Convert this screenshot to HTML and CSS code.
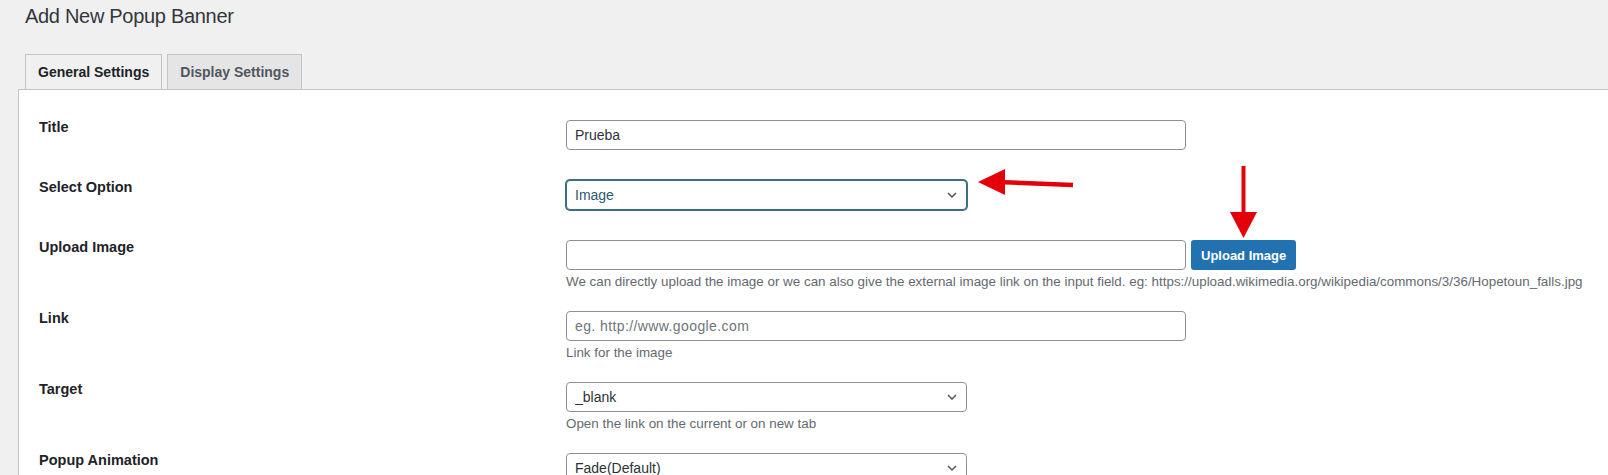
FILE: index.html
```html
<!DOCTYPE html>
<html lang="en">
<head>
    <meta charset="UTF-8">
    <meta name="viewport" content="width=device-width, initial-scale=1.0">
    <title>Add New Popup Banner</title>
    <link rel="stylesheet" href="styles.css">
</head>
<body>
    <div class="wrap">
        <h1 class="page-title">Add New Popup Banner</h1>

        <div class="nav-tabs">
            <a class="nav-tab nav-tab-active">General Settings</a>
            <a class="nav-tab">Display Settings</a>
        </div>

        <div class="panel">
            <div class="field-row">
                <label class="field-label">Title</label>
                <div class="field-control">
                    <input type="text" class="text-input" value="Prueba">
                </div>
            </div>

            <div class="field-row">
                <label class="field-label">Select Option</label>
                <div class="field-control">
                    <div class="select-wrap is-focus">
                        <select class="select-input">
                            <option>Image</option>
                        </select>
                        <svg class="chevron" width="10" height="6" viewBox="0 0 10 6"><path d="M1 1l4 4 4-4" fill="none" stroke="#50575e" stroke-width="1.5"/></svg>
                    </div>
                </div>
            </div>

            <div class="field-row">
                <label class="field-label">Upload Image</label>
                <div class="field-control has-desc">
                    <div class="upload-line">
                        <input type="text" class="text-input">
                        <button class="button-primary">Upload Image</button>
                    </div>
                    <p class="description">We can directly upload the image or we can also give the external image link on the input field. eg: https://upload.wikimedia.org/wikipedia/commons/3/36/Hopetoun_falls.jpg</p>
                </div>
            </div>

            <div class="field-row">
                <label class="field-label">Link</label>
                <div class="field-control has-desc">
                    <input type="text" class="text-input" placeholder="eg. http://www.google.com">
                    <p class="description">Link for the image</p>
                </div>
            </div>

            <div class="field-row">
                <label class="field-label">Target</label>
                <div class="field-control has-desc">
                    <div class="select-wrap">
                        <select class="select-input">
                            <option>_blank</option>
                        </select>
                        <svg class="chevron" width="10" height="6" viewBox="0 0 10 6"><path d="M1 1l4 4 4-4" fill="none" stroke="#50575e" stroke-width="1.5"/></svg>
                    </div>
                    <p class="description">Open the link on the current or on new tab</p>
                </div>
            </div>

            <div class="field-row">
                <label class="field-label">Popup Animation</label>
                <div class="field-control">
                    <div class="select-wrap">
                        <select class="select-input">
                            <option>Fade(Default)</option>
                        </select>
                        <svg class="chevron" width="10" height="6" viewBox="0 0 10 6"><path d="M1 1l4 4 4-4" fill="none" stroke="#50575e" stroke-width="1.5"/></svg>
                    </div>
                </div>
            </div>
        </div>
    </div>

    <!-- red annotation arrows -->
    <svg class="arrow arrow-left" width="100" height="30" viewBox="975 168 100 30">
        <line x1="998" y1="182" x2="1073" y2="185" stroke="#e3000b" stroke-width="4.5"/>
        <polygon points="978,182 1005,169 1005,195" fill="#e3000b"/>
    </svg>
    <svg class="arrow arrow-down" width="30" height="75" viewBox="1228 165 30 75">
        <line x1="1243.5" y1="166" x2="1243.5" y2="215" stroke="#e3000b" stroke-width="4"/>
        <polygon points="1230,212 1257,212 1243.5,238" fill="#e3000b"/>
    </svg>
</body>
</html>
```

FILE: styles.css
```css
body {
    margin: 0;
    background: #f0f0f1;
    font-family: 'Liberation Sans', Arial, sans-serif;
    color: #3c434a;
    position: relative;
    overflow: hidden;
}
.wrap {
    padding-left: 18px;
}
.page-title {
    margin: 4px 0 0 7px;
    font-size: 20px;
    line-height: 24px;
    font-weight: 400;
    letter-spacing: -0.3px;
    color: #32373c;
}
.nav-tabs {
    display: flex;
    gap: 5px;
    margin-top: 26px;
    padding-left: 7px;
}
.nav-tab {
    box-sizing: border-box;
    height: 35px;
    padding: 0 12px;
    display: flex;
    align-items: center;
    border: 1px solid #c3c4c7;
    border-bottom: none;
    background: #e5e5e5;
    color: #50575e;
    font-size: 14px;
    font-weight: bold;
}
.nav-tab-active {
    background: #f0f0f1;
    color: #1d2327;
}
.panel {
    background: #fff;
    border-top: 1px solid #c3c4c7;
    border-left: 1px solid #c3c4c7;
    padding: 15px 0 0 20px;
    min-height: 400px;
}
.field-row {
    display: grid;
    grid-template-columns: 527px 1fr;
}
.field-label {
    padding-top: 13px;
    font-size: 14.5px;
    line-height: 18px;
    font-weight: bold;
    color: #1d2327;
}
.field-control {
    padding: 15px 0;
}
.field-control.has-desc {
    padding-bottom: 6px;
}
.text-input,
.select-input {
    box-sizing: border-box;
    height: 30px;
    border: 1px solid #8c8f94;
    border-radius: 4px;
    background: #fff;
    padding: 0 8px;
    font-family: 'Liberation Sans', Arial, sans-serif;
    font-size: 14px;
    color: #2c3338;
    display: block;
}
.text-input {
    width: 620px;
}
.text-input::placeholder {
    color: #6e7479;
    letter-spacing: 0.4px;
}
.select-wrap {
    position: relative;
    width: 401px;
}
.select-input {
    width: 100%;
    -webkit-appearance: none;
    appearance: none;
    padding-right: 24px;
}
.select-wrap.is-focus .select-input {
    border-color: #3b6e80;
    box-shadow: 0 0 0 1px #3b6e80;
    color: #2c5a6e;
}
.chevron {
    position: absolute;
    right: 10px;
    top: 12px;
    pointer-events: none;
}
.upload-line {
    display: flex;
    gap: 5px;
}
.button-primary {
    height: 30px;
    padding: 0 10px;
    border: none;
    border-radius: 3px;
    background: #2271b1;
    color: #fff;
    font-family: 'Liberation Sans', Arial, sans-serif;
    font-size: 13px;
    font-weight: bold;
}
.description {
    margin: 3px 0 0;
    font-size: 13.4px;
    line-height: 17px;
    color: #646970;
    white-space: nowrap;
}
.arrow {
    position: absolute;
}
.arrow-left {
    left: 975px;
    top: 168px;
}
.arrow-down {
    left: 1228px;
    top: 165px;
}
```
